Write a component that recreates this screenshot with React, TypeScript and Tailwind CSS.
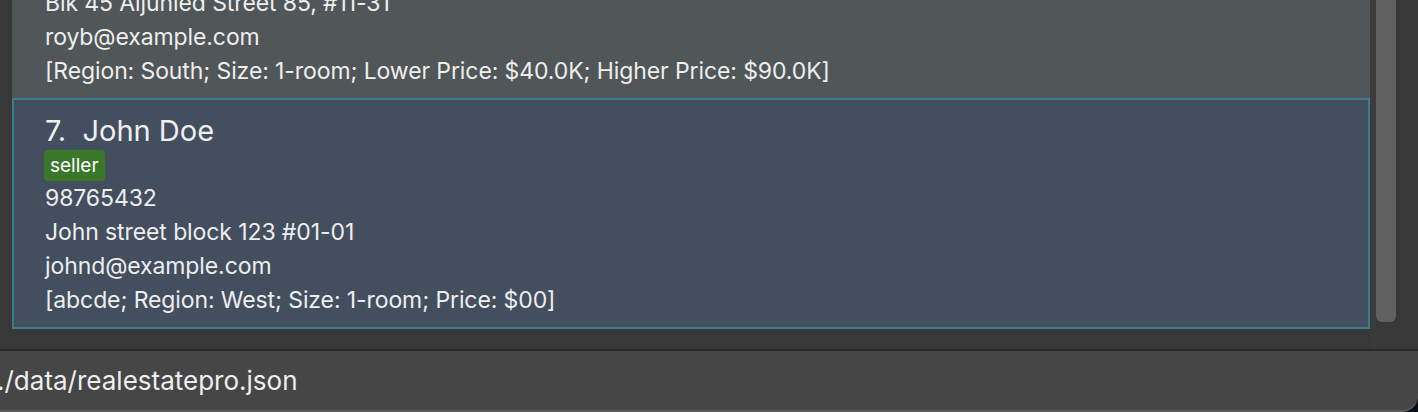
type Person = {
  index: number;
  name: string;
  tag: string;
  phone: string;
  address: string;
  email: string;
  details: string;
  selected?: boolean;
};

const people: Person[] = [
  {
    index: 6,
    name: 'Roy Balakrishnan',
    tag: 'buyer',
    phone: '92624417',
    address: 'Blk 45 Aljunied Street 85, #11-31',
    email: 'royb@example.com',
    details: '[Region: South; Size: 1-room; Lower Price: $40.0K; Higher Price: $90.0K]',
  },
  {
    index: 7,
    name: 'John Doe',
    tag: 'seller',
    phone: '98765432',
    address: 'John street block 123 #01-01',
    email: 'johnd@example.com',
    details: '[abcde; Region: West; Size: 1-room; Price: $00]',
    selected: true,
  },
];

function PersonCard({ person }: { person: Person }) {
  return (
    <div
      className={
        person.selected
          ? 'border-2 border-[#3f7b8d] bg-[#434e5f] pl-[31px] pt-[12px] pb-[10px]'
          : 'bg-[#515658] pl-[33px] pt-[12px] pb-[10px]'
      }
    >
      <div className="text-[29px] leading-[38px] text-[#f0f0f0]">
        {person.index}.&nbsp;&nbsp;{person.name}
      </div>
      <div className="h-[31px] flex items-start">
        <span className="bg-[#3b7728] text-white text-[19px] leading-[31px] px-[6px] rounded-[4px] -ml-[1px]">
          {person.tag}
        </span>
      </div>
      <div className="text-[23px] leading-[34px] text-[#eeeeee] tracking-[-0.1px]">
        <div>{person.phone}</div>
        <div>{person.address}</div>
        <div>{person.email}</div>
        <div>{person.details}</div>
      </div>
    </div>
  );
}

export default function App() {
  return (
    <div
      className="w-[1418px] h-[412px] bg-[#0b0f1a] overflow-hidden"
      style={{ fontFamily: 'Inter, "Noto Sans", sans-serif' }}
    >
      <div className="w-full h-full bg-[#383838] rounded-br-[16px] overflow-hidden flex flex-col">
        {/* List panel */}
        <div className="h-[349px] flex overflow-hidden">
          <div className="w-[12px] shrink-0" />
          <div className="w-[1358px] shrink-0 -mt-[129px] flex flex-col">
            {people.map((p) => (
              <PersonCard key={p.index} person={p} />
            ))}
          </div>
          <div className="w-[6px] shrink-0 bg-[#3b3b3b]" />
          <div className="w-[20px] shrink-0 h-[322px] bg-[#606060] rounded-b-[6px]" />
          <div className="flex-1" />
        </div>

        {/* Status bar */}
        <div className="h-[2px] bg-[#2a2a2a]" />
        <div className="flex-1 bg-[#464646] border-b-2 border-[#5c5c5c] rounded-br-[16px] flex items-center">
          <span className="-ml-[3px] text-[26px] text-[#eeeeee]">
            ./data/realestatepro.json
          </span>
        </div>
      </div>
    </div>
  );
}
